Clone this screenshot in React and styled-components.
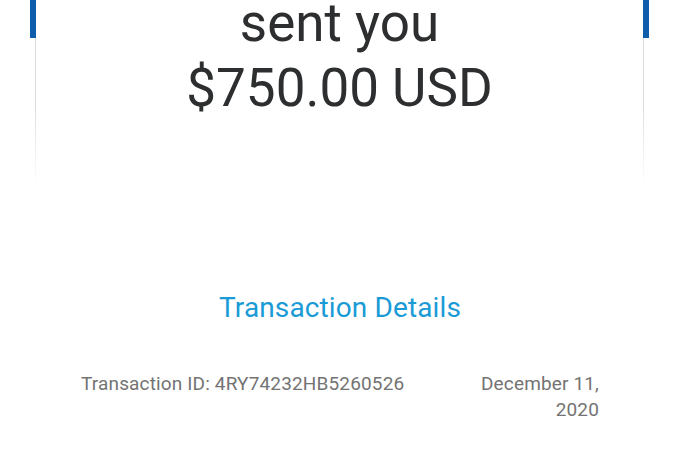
import React from "react";
import styled, { createGlobalStyle } from "styled-components";

const Global = createGlobalStyle`
  html, body { margin: 0; padding: 0; background: #ffffff; }
  body { font-family: Roboto, "Noto Sans", "Liberation Sans", sans-serif; overflow: hidden; }
`;

const Page = styled.div`
  width: 680px;
  height: 473px;
  display: flex;
  flex-direction: column;
  background: #fff;
`;

const Card = styled.section`
  margin: 0 31px 0 30px;
  height: 190px;
  display: flex;
  flex-direction: column;
  align-items: center;
  background:
    linear-gradient(#0e5dab, #0e5dab) 0 0 / 6px 38px no-repeat,
    linear-gradient(#0e5dab, #0e5dab) 100% 0 / 6px 38px no-repeat,
    linear-gradient(to bottom, #dadada 40%, rgba(240, 240, 240, 0)) 5px 38px / 1px 150px no-repeat,
    linear-gradient(to bottom, #dadada 40%, rgba(240, 240, 240, 0)) calc(100% - 5px) 38px / 1px 150px no-repeat;
`;

const Headline = styled.h1`
  margin: -9px 0 0;
  font-size: 53px;
  line-height: 65px;
  font-weight: 400;
  color: #2c2e2f;
  text-align: center;
`;

const Details = styled.div`
  display: flex;
  flex-direction: column;
`;

const Title = styled.h2`
  margin: 101px 0 0;
  font-size: 28px;
  line-height: 34px;
  letter-spacing: 0.12px;
  font-weight: 400;
  color: #1a9bd6;
  text-align: center;
`;

const Row = styled.div`
  margin-top: 46px;
  padding: 0 81px;
  display: flex;
  justify-content: space-between;
  align-items: flex-start;
  font-size: 19px;
  line-height: 26px;
  letter-spacing: 0.15px;
  color: #737373;
`;

const Cell = styled.div`
  width: ${(p) => p.$w || "auto"};
  text-align: ${(p) => p.$align || "left"};
`;

export default function App() {
  return (
    <Page>
      <Global />
      <Card>
        <Headline>
          sent you
          <br />
          $750.00 USD
        </Headline>
      </Card>
      <Details>
        <Title>Transaction Details</Title>
        <Row>
          <Cell>Transaction ID: 4RY74232HB5260526</Cell>
          <Cell $w="135px" $align="right">December 11, 2020</Cell>
        </Row>
      </Details>
    </Page>
  );
}
